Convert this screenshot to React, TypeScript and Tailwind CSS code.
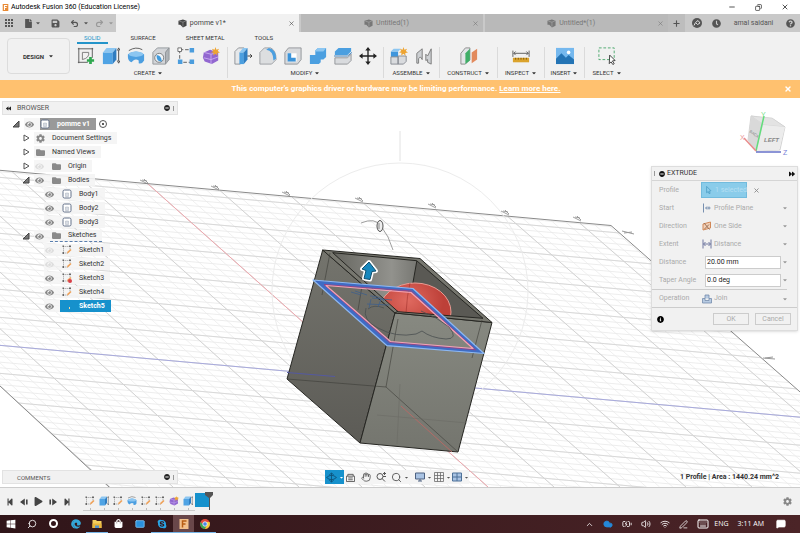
import type { ReactNode } from 'react'
import { clsx } from 'clsx'
import {
  FaBackward,
  FaCaretDown,
  FaCog,
  FaEye,
  FaFolder,
  FaForward,
  FaInfoCircle,
  FaMinusCircle,
  FaQuestionCircle,
  FaClock,
  FaPlay,
  FaStepBackward,
  FaStepForward,
  FaSave,
  FaFile,
  FaWindows,
  FaEdge,
  FaSkype,
  FaShoppingBag
} from 'react-icons/fa'
import {
  BatteryCharging,
  ChevronUp,
  Cloud,
  Copy,
  Hand,
  Keyboard,
  Mail,
  MessageSquareText,
  Minus,
  PenLine,
  Plus,
  Redo2,
  Search,
  Undo2,
  Volume2,
  Wifi,
  X
} from 'lucide-react'

type IconProps = { children: ReactNode; className?: string }

const Icon = ({ children, className = 'size-[18px]' }: IconProps) => {
  return (
    <svg
      viewBox="0 0 20 20"
      fill="none"
      aria-hidden="true"
      className={clsx('shrink-0', className)}
    >
      {children}
    </svg>
  )
}

const Star = () => {
  return (
    <path
      d="m15 0 1 3 3-1-1.500 2.500L20 6l-3 .7.200 3L15 7.500l-2.500 2 .3-3L10 6l2.500-1.500L11 2l3 1Z"
      fill="#eda432"
    />
  )
}

const SketchIcon = ({ className }: { className?: string }) => {
  return (
    <Icon className={className}>
      <path d="M2 3h15M3 2v15M2 16h10M16 2v9" stroke="#777" strokeDasharray="3 1" />
      <path d="M1 1h3v3H1ZM14 1h4v3h-4ZM1 14h3v4H1Z" fill="#666" />
      <path d="m10 17 1-4 6-5 2 2-6 6Z" fill="#f0a35b" />
    </Icon>
  )
}

const BodyIcon = ({ className }: { className?: string }) => {
  return (
    <Icon className={className}>
      <rect x="2" y="2" width="16" height="16" rx="3" fill="#fff" stroke="#65728a" strokeWidth="2" />
      <path d="M7 8h6v7H7Z" fill="#d7dbe2" stroke="#a9b0bd" />
    </Icon>
  )
}

const BoxIcon = ({ className }: { className?: string }) => {
  return (
    <Icon className={className}>
      <path d="m1 4 10-3 8 3v11l-8 4-6-6H1Z" fill="currentColor" />
      <path d="m3 5 8 2v10M11 7l7-3" stroke="#bbb" />
    </Icon>
  )
}

const ExtrudeIcon = ({ className }: { className?: string }) => {
  return (
    <Icon className={className}>
      <path d="M1 6h11v13H1Z" fill="#4fa3e4" />
      <path d="m1 6 4-5h11l-4 5Z" fill="#8cc6f1" />
      <path d="m12 6 4-5v13l-4 5Z" fill="#2f7dc1" />
      <path d="M18.500 3v13M17 4l1.500-3L20 4M17 15l1.500 3 1.500-3" stroke="#444" />
    </Icon>
  )
}

const RevolveIcon = ({ className }: { className?: string }) => {
  return (
    <Icon className={className}>
      <path d="M1 8q9-6 18 0v7q-2 4-6 3v-3q-3-2-6 0l-2 2q-4-2-4-6Z" fill="#4d9fe0" />
      <ellipse cx="10" cy="8" rx="8" ry="3" fill="#8cc6f1" />
      <path d="M2 4q8-5 15-1" stroke="#555" />
    </Icon>
  )
}

const FormIcon = ({ className }: { className?: string }) => {
  return (
    <Icon className={className}>
      <path d="m2 6 7-3 9 3v9l-7 4-8-3-2-4Z" fill="#9267d0" />
      <path d="m2 6 8 2 8-2M10 8v11M2 12l8 2 8-3" stroke="#c9aef0" />
      <Star />
    </Icon>
  )
}

type Group = { label: string; className: string; icons: ReactNode[] }

const GROUPS: Group[] = [
  {
    label: 'CREATE',
    className: 'px-[7px]',
    icons: [
      <Icon key="sketch">
        <path d="M1 2h17M2 1v17M1 17h11M17 1v11" stroke="#555" />
        <path d="M6 6h7q1 6-7 8Z" stroke="#777" />
        <path d="M15 11v8M11 15h8" stroke="#2fa84f" strokeWidth="3" />
      </Icon>,
      <ExtrudeIcon key="extrude" />,
      <RevolveIcon key="revolve" />,
      <Icon key="hole">
        <path d="m1 6 5-5h13l-4 5v13H1Z" fill="#d3d5d8" stroke="#909498" />
        <path d="m15 6 4-5v13l-4 5Z" fill="#aeb2b6" stroke="#909498" />
        <circle cx="8" cy="12" r="5" fill="#eef3f7" stroke="#777" />
        <path d="M5 9q5 0 6 7-6 1-6-7Z" fill="#419bdd" />
      </Icon>,
      <Icon key="pattern">
        <path d="M3 3h14M3 3v14h14" stroke="#555" strokeDasharray="4 2" />
        <path d="M1 1h4v4H1Z" fill="#fff" stroke="#666" />
        <path d="M14 1h5v5h-5ZM1 14h5v5H1ZM14 14h5v5h-5Z" fill="#4b9ddd" />
      </Icon>,
      <FormIcon key="form" />
    ]
  },
  {
    label: 'MODIFY',
    className: 'px-[6px]',
    icons: [
      <Icon key="pull">
        <path d="m1 5 4-4h6v13l-4 5H1Z" fill="#e6e8ea" stroke="#8b8f94" />
        <path d="M6 6h5v13H6Z" fill="#4b9fe0" />
        <path d="m6 6 4-5h5l-4 5Z" fill="#8cc6f1" />
        <path d="m11 6 4-5v13l-4 5Z" fill="#2f7dc1" />
        <path d="M15 10h5m-2-2 2 2-2 2" stroke="#333" />
      </Icon>,
      <Icon key="fillet">
        <path d="m1 6 5-5h7q6 3 6 13l-5 5H1Z" fill="#dcdee0" stroke="#989ca0" />
        <path d="M8 3q8 1 8 12l3-2Q19 3 11 1Z" fill="#4b9fe0" />
      </Icon>,
      <Icon key="shell">
        <path d="m1 6 4-5h14v13l-4 5H1Z" fill="#d8dadd" stroke="#8e9296" />
        <path d="M4 7h10v9H4Z" fill="#fff" />
        <path d="M4 7v9h9v-4H8V7Z" fill="#3b93d9" />
      </Icon>,
      <Icon key="combine">
        <path d="M1 9h6V4l3-3h9v10l-3 3h-3v3l-2 2H1Z" fill="#4b9fe0" />
        <path d="m7 4 3-3h9l-3 4H7Z" fill="#8cc6f1" />
      </Icon>,
      <Icon key="split">
        <path d="m1 5 4-4h14v4l-4 4H1Z" fill="#4b9fe0" />
        <path d="M1 12h14l4-4v7l-4 4H1Z" fill="#d9dbde" stroke="#8e9296" />
        <path d="M0 10h15l5-4" stroke="#3579b5" />
      </Icon>,
      <Icon key="move">
        <path d="M10 2v16M2 10h16" stroke="#222" strokeWidth="1.500" />
        <path d="m10 0 3 4H7ZM10 20l3-4H7ZM0 10l4-3v6ZM20 10l-4-3v6Z" fill="#222" />
      </Icon>
    ]
  },
  {
    label: 'ASSEMBLE',
    className: 'px-[6px]',
    icons: [
      <Icon key="component">
        <path d="M1 5h8v6H1Z" fill="#3f96dc" />
        <path d="m1 5 3-3h8L9 5Z" fill="#8cc6f1" />
        <path d="M1 11h8v8H1ZM9 10h9v6l-3 3H9Z" fill="#d9dbde" stroke="#83888e" />
        <Star />
      </Icon>,
      <Icon key="joint">
        <path d="M2 7 8 2v12l-2-3-2 2v5H2ZM12 8l2 2 4-8v17l-4-2v-3l-2 1Z" fill="#cdd0d3" stroke="#777" />
      </Icon>
    ]
  },
  {
    label: 'CONSTRUCT',
    className: 'w-[58px]',
    icons: [
      <Icon key="plane">
        <path d="m1 7 5-6h5v13l-5 5H1Z" fill="#e3e5e8" stroke="#888" />
        <path d="m6 7 5-5v13l-5 4Z" fill="#3fae67" />
        <path d="m13 6 6-4v12l-6 4Z" fill="#e28a5d" />
      </Icon>
    ]
  },
  {
    label: 'INSPECT',
    className: 'w-[47px]',
    icons: [
      <Icon key="measure">
        <path d="M1 4v7M19 4v7M2 7h16M4 5 2 7l2 2M16 5l2 2-2 2" stroke="#555" />
        <path d="M1 12h18v5H1Z" fill="#dba32c" />
        <path d="M4 12v2m3-2v2m3-2v2m3-2v2m3-2v2" stroke="#79540a" />
      </Icon>
    ]
  },
  {
    label: 'INSERT',
    className: 'w-10',
    icons: [
      <Icon key="picture">
        <path d="M0 1h20v18H0Z" fill="#75b8ee" />
        <path d="M0 13 6 7l5 5 3-3 6 5v5H0Z" fill="#2474b5" />
        <circle cx="14" cy="6" r="2" fill="#fff" />
      </Icon>
    ]
  },
  {
    label: 'SELECT',
    className: 'w-11',
    icons: [
      <Icon key="select">
        <path d="M1 1h17v13H1Z" stroke="#45a568" strokeDasharray="3 2" />
        <path d="m13 9 6 6-3 .5 2 3-1.500 1-2-3-2 2Z" fill="#fff" stroke="#333" />
      </Icon>
    ]
  }
]

const DOCUMENTS = [
  { name: 'pomme v1*', active: true },
  { name: 'Untitled(1)', active: false },
  { name: 'Untitled*(1)', active: false }
]

const TitleBar = () => {
  return (
    <header className="flex h-[14px] items-center bg-white pl-0.5">
      <Icon className="size-[7px]">
        <path d="M2 0h16v20H2Z" fill="#e98a34" />
        <path d="M7 17V4h8M7 10h6" stroke="#fff" strokeWidth="3" />
      </Icon>
      <h1 className="ml-0.5 flex-1 font-['Roboto',sans-serif] text-[7px]">
        Autodesk Fusion 360 (Education License)
      </h1>
      <div className="flex items-center gap-[19px] pr-[11px]">
        <button aria-label="Minimize">
          <Minus className="size-[8px]" />
        </button>
        <button aria-label="Restore">
          <Copy className="size-[7px] -scale-x-100" />
        </button>
        <button aria-label="Close">
          <X className="size-[8px]" />
        </button>
      </div>
    </header>
  )
}

const DocumentBar = () => {
  return (
    <div className="flex h-[18px] bg-[#c9c9c9] text-[#555]">
      <div className="flex w-[116px] items-center pl-[5px]">
        <button aria-label="Data panel">
          <svg viewBox="0 0 9 9" className="size-[9px]" fill="#555" aria-hidden="true">
            <path d="M0 0h2v2H0ZM3 0h2v2H3ZM6 0h2v2H6ZM0 3h2v2H0ZM3 3h2v2H3ZM6 3h2v2H6ZM0 6h2v2H0ZM3 6h2v2H3ZM6 6h2v2H6Z" />
          </svg>
        </button>
        <button aria-label="File" className="ml-2.5 flex items-center gap-0.5">
          <FaFile className="size-[9px]" />
          <FaCaretDown className="size-[6px]" />
        </button>
        <button aria-label="Save" className="ml-[10px]">
          <FaSave className="size-[9px]" />
        </button>
        <button aria-label="Undo" className="ml-[10px] flex items-center gap-1">
          <Undo2 className="size-[9px]" strokeWidth={3} />
          <FaCaretDown className="size-[6px]" />
        </button>
        <button aria-label="Redo" className="ml-[6px] flex items-center gap-1 text-[#999]">
          <Redo2 className="size-[9px]" strokeWidth={3} />
          <FaCaretDown className="size-[6px]" />
        </button>
      </div>
      <div className="flex flex-1 gap-[2px]">
        {DOCUMENTS.map((item) => {
          return (
            <div
              key={item.name}
              className={clsx(
                'flex flex-1 items-center pr-1',
                item.active ? 'bg-[#f1f1f1] text-[#444]' : 'bg-[#b9b9b9] text-[#777]'
              )}
            >
              <button className="flex flex-1 items-center justify-center gap-[3px] font-['Roboto',sans-serif] text-[7px]">
                <BoxIcon className="size-[9px]" />
                {item.name}
              </button>
              <button aria-label={`Close ${item.name}`}>
                <X className="size-[7px]" />
              </button>
            </div>
          )
        })}
      </div>
      <div className="flex w-[132px] items-center pr-[5px]">
        <button aria-label="New tab" className="grid h-full w-[17px] place-items-center bg-[#bdbdbd]">
          <Plus className="size-[9px]" strokeWidth={3} />
        </button>
        <button aria-label="Extensions" className="ml-[7px]">
          <Icon className="size-[10px]">
            <circle cx="10" cy="10" r="10" fill="#555" />
            <path d="m4 15 3-6 5-4 4 5-5 3-3-3" stroke="#ddd" strokeWidth="2" />
          </Icon>
        </button>
        <button aria-label="Job status" className="ml-[10px]">
          <FaClock className="size-[9px]" />
        </button>
        <button className="flex-1 font-['Roboto',sans-serif] text-[7px]">
          amal saidani
        </button>
        <button aria-label="Help">
          <FaQuestionCircle className="size-[9px]" />
        </button>
      </div>
    </div>
  )
}

const Toolbar = () => {
  return (
    <div className="flex h-12 bg-[#f1f1f1] font-['Roboto',sans-serif] text-[6px] text-[#333]">
      <button className="my-[6px] ml-[7px] flex w-[63px] items-center justify-center gap-1 rounded-sm border border-[#dcdcdc] font-bold">
        DESIGN
        <FaCaretDown className="size-[6px]" />
      </button>
      <div>
        <nav aria-label="Workspace tabs" className="flex h-3 gap-4 pl-[7px]">
          {['SOLID', 'SURFACE', 'SHEET METAL', 'TOOLS'].map((tab, index) => {
            return (
              <a
                key={tab}
                href="#"
                className={clsx(
                  'border-b-2 px-[7px] leading-[12px]',
                  index === 0 ? 'border-[#2494c9] text-[#2494c9]' : 'border-transparent'
                )}
              >
                {tab}
              </a>
            )
          })}
        </nav>
        <div className="flex divide-x divide-[#dadada] pt-[3px]">
          {GROUPS.map((group) => {
            return (
              <div key={group.label} className={clsx('flex flex-col items-center', group.className)}>
                <div className="flex gap-[7px]">
                  {group.icons.map((icon, index) => {
                    return (
                      <button key={index} aria-label={`${group.label} ${index + 1}`}>
                        {icon}
                      </button>
                    )
                  })}
                </div>
                <button className="mt-[3px] flex items-center gap-0.5 leading-[10px]">
                  {group.label}
                  <FaCaretDown className="size-[6px]" />
                </button>
              </div>
            )
          })}
        </div>
      </div>
    </div>
  )
}

const Banner = () => {
  return (
    <div
      role="alert"
      className="flex h-[18px] items-center bg-[#ffc16f] px-2 font-['Roboto',sans-serif] text-[8px] font-bold text-white"
    >
      <p className="flex-1 text-center">
        This computer's graphics driver or hardware may be limiting performance.{' '}
        <a href="#" className="underline">
          Learn more here.
        </a>
      </p>
      <button aria-label="Dismiss">
        <X className="size-[8px]" strokeWidth={4} />
      </button>
    </div>
  )
}

const range = (from: number, to: number) => {
  return Array.from({ length: to - from + 1 }, (_, index) => {
    return from + index
  })
}

// lines going down to the right, five cells between two major ones
const steepLine = (step: number) => {
  const unit = step / 5
  const x1 = 148 + unit * (unit < 0 ? 68 : 72)
  const x2 = 488 + unit * (unit < 0 ? 63 : 66)
  return `M${x1} ${170.500 + x1 * 0.091}L${x2} 487`
}

const shallowLine = (step: number) => {
  const y = 345 + step * 5.600
  return `M-260 ${y - 23}L820 ${y + 74}`
}

const TICKS = [
  [144, 182],
  [215, 188],
  [286, 194],
  [359, 200],
  [432, 206],
  [505, 213],
  [577, 219]
]

const Grid = () => {
  return (
    <g fill="none">
      <clipPath id="ground">
        <path d="M-258 147 611 225.500 908 487H109Z" />
      </clipPath>
      <g clipPath="url(#ground)">
        <path d={range(-30, 32).map(steepLine).join('')} stroke="#f0f0f0" />
        <path d={range(-32, 48).map(shallowLine).join('')} stroke="#e8e8e8" strokeWidth=".8" />
        <path
          d={range(-6, 6).map((step) => steepLine(step * 5)).join('')}
          stroke="#d3d3d3"
        />
        <path
          d={range(-6, 9).map((step) => shallowLine(step * 5)).join('')}
          stroke="#d3d3d3"
          strokeWidth=".8"
        />
        <path d={steepLine(0)} stroke="#efa8ae" />
        <path d={shallowLine(0)} stroke="#9a9ddd" strokeWidth=".8" />
      </g>
      <path d="M-258 147 611 225.500 908 487M109 487-258 147" stroke="#8a8a8a" />
      {TICKS.map(([x, y]) => {
        return <path key={x} d={`m${x - 4} ${y - 2} 8 4m-6-4 5 1m-3-2 4 4`} stroke="#888" strokeWidth=".8" />
      })}
      <path d="m622 231 12 3m-10-1 8-1m131 126 12 1m-10-1 8-1" stroke="#999" />
      <circle cx="400" cy="291" r="128" stroke="#ececec" />
      <path d="M400 131v30" stroke="#e2e2e2" />
    </g>
  )
}

const Model = () => {
  return (
    <g fill="none" strokeLinejoin="round">
      <defs>
        <linearGradient id="left-face" x1="0" y1="0" x2="0" y2="1">
          <stop offset="0" stopColor="#74746d" />
          <stop offset="1" stopColor="#5c5b56" />
        </linearGradient>
        <linearGradient id="right-face" x1="0" y1="0" x2="0" y2="1">
          <stop offset="0" stopColor="#878981" />
          <stop offset="1" stopColor="#74756e" />
        </linearGradient>
        <linearGradient id="back-wall">
          <stop offset="0" stopColor="#65655f" />
          <stop offset="0.7" stopColor="#92928d" />
          <stop offset="1" stopColor="#777772" />
        </linearGradient>
        <radialGradient id="apple" cx=".4" cy=".3">
          <stop offset="0" stopColor="#e06a60" />
          <stop offset="1" stopColor="#bd4038" />
        </radialGradient>
        <clipPath id="opening">
          <path d="M332.700 252.700 416.700 260.700 483 318.300 398 311.700Z" />
        </clipPath>
      </defs>
      <path d="M322.700 250 395 313 360 443 287 379Z" fill="url(#left-face)" stroke="#262622" />
      <path d="m395 313 97 9.500L458 452 360 443Z" fill="url(#right-face)" stroke="#262622" />
      <path d="m322.700 250 97.300 8.500 72 64-97-9.500Z" fill="#77776f" stroke="#262622" />
      <g clipPath="url(#opening)">
        <path d="M332 252h85l-6 60h-20Z" fill="url(#back-wall)" />
        <path d="M417 260 490 320h-90l12-30Z" fill="#5a5954" />
        <path d="m417 260-5 28" stroke="#262622" />
        <ellipse cx="415" cy="312" rx="36" ry="29" fill="url(#apple)" stroke="#e99a92" />
        <path d="M410 283q-3 12-4 30" stroke="#a1332d" strokeWidth=".6" />
      </g>
      <path
        d="M332.700 252.700 416.700 260.700 483 318.300 398 311.700Z"
        stroke="#262622"
      />
      <path
        d="m287 379 99 8 72 65M386 387l12-68M330 253l-8 42M482 320l-10 38M362 286l-4 24"
        stroke="#3d3d38"
        strokeWidth=".6"
      />
      <path d="M287 372.500 335 376.500" stroke="#5459a0" />
      <path d="m401 406 51 46" stroke="#b36a66" />
      <path d="m400 384-3 60m-20-29 90 8" stroke="#686963" strokeWidth=".5" />
      {/* sketch profile with the apple curve */}
      <path
        d="M313 280 413 288.500 484 353.500 387 345.700ZM325 285 390 341.700 474 349 411 291.700Z"
        fill="#3f6cc4"
        fillRule="evenodd"
      />
      <path d="M313 280 413 288.500 484 353.500 387 345.700Z" stroke="#8db8f2" strokeWidth="1.200" />
      <path d="M324 284.500 389.500 342.500 475.500 349.800 411.500 291Z" stroke="#a83c78" strokeWidth=".8" />
      <path d="M326 285.500 390.500 341.500 473 348.500 411 292.500Z" stroke="#f6a2b4" strokeWidth="1.200" />
      <path
        d="M366 308q-4 12 12 20 18 10 38 6l6-3q9 7 24 8 13 0 3-12-12-10-28-16M368 309q6-5 16-1"
        stroke="#4a4f50"
        strokeWidth=".8"
      />
      <path d="m351 292 10 3m-6-4 12 4m3 1q10 0 14 5m-12-3 20 2m-25 4 22 1m-18-6-2 9m12-9-3 8" stroke="#40608a" strokeWidth=".8" />
      <path d="M395 313 398 311" stroke="#262622" />
      {/* manipulator */}
      <path d="M361 223q14-6 20 3 8 10 12 24" stroke="#888" strokeWidth=".8" />
      <ellipse cx="380" cy="226" rx="3" ry="5.500" fill="#eee" stroke="#555" />
      <path d="M379 223v6" stroke="#888" />
      <path
        d="m369 262 7 9-4 .5-2 8-6-1 2-8-4-1.500Z"
        fill="#1787bd"
        stroke="#fff"
        strokeWidth="4"
      />
      <path d="m369 262 7 9-4 .5-2 8-6-1 2-8-4-1.500Z" fill="#1787bd" stroke="#10506f" />
    </g>
  )
}

const ViewCube = () => {
  return (
    <g fill="none">
      <path d="m751 116-3 24 8 11 24-1 5-23-12-8Z" fill="#f0f0f0" stroke="#bbb" strokeWidth=".6" />
      <path d="m751 116 13 9 21 2-13-9Z" fill="#e3e3e3" stroke="#ccc" strokeWidth=".6" />
      <path d="m751 116 13 9-8 26-8-11Z" fill="#d9d9d9" />
      <path d="m763 125 22 2-6 23-23 1Z" fill="#ececec" />
      <path d="m756 151 8-35" stroke="#63dd7c" strokeWidth="1.500" />
      <path d="M756 151 744 138" stroke="#e98c8c" strokeWidth="1.500" />
      <path d="M756 152h25" stroke="#6670c8" strokeWidth="1.500" />
      <g fontFamily="Liberation Sans, sans-serif" fontSize="7">
        <text x="764" y="142" fill="#888" fontSize="6" fontStyle="italic" fontWeight="bold">
          LEFT
        </text>
        <text x="749" y="132" fill="#888" fontSize="4" transform="rotate(35 749 132)">
          BACK
        </text>
        <text x="761" y="117" fill="#7ee08d">Y</text>
        <text x="740" y="140" fill="#eb9a9a">X</text>
        <text x="783" y="155" fill="#777fd6">Z</text>
      </g>
    </g>
  )
}

type Node = {
  label: string
  depth: number
  kind: 'root' | 'settings' | 'folder' | 'body' | 'sketch'
  arrow?: 'open' | 'closed'
  eye?: 'on' | 'off'
  selected?: boolean
  locked?: boolean
}

const NODES: Node[] = [
  { label: 'pomme v1', depth: 0, kind: 'root', arrow: 'open', eye: 'on' },
  { label: 'Document Settings', depth: 1, kind: 'settings', arrow: 'closed' },
  { label: 'Named Views', depth: 1, kind: 'folder', arrow: 'closed' },
  { label: 'Origin', depth: 1, kind: 'folder', arrow: 'closed', eye: 'off' },
  { label: 'Bodies', depth: 1, kind: 'folder', arrow: 'open', eye: 'on' },
  { label: 'Body1', depth: 2, kind: 'body', eye: 'on' },
  { label: 'Body2', depth: 2, kind: 'body', eye: 'on' },
  { label: 'Body3', depth: 2, kind: 'body', eye: 'on' },
  { label: 'Sketches', depth: 1, kind: 'folder', arrow: 'open', eye: 'on' },
  { label: 'Sketch1', depth: 2, kind: 'sketch', eye: 'off' },
  { label: 'Sketch2', depth: 2, kind: 'sketch', eye: 'off' },
  { label: 'Sketch3', depth: 2, kind: 'sketch', eye: 'on', locked: true },
  { label: 'Sketch4', depth: 2, kind: 'sketch', eye: 'on' },
  { label: 'Sketch5', depth: 2, kind: 'sketch', eye: 'on', selected: true }
]

const NodeIcon = ({ node }: { node: Node }) => {
  if (node.kind === 'settings') {
    return <FaCog className="size-[9px] text-[#888]" />
  }

  if (node.kind === 'folder') {
    return <FaFolder className="size-[9px] text-[#8a8a8a]" />
  }

  if (node.kind === 'sketch') {
    return (
      <span className="relative">
        <SketchIcon className={clsx('size-[10px]', node.selected && 'opacity-0')} />
        {node.locked && <span className="absolute right-0 bottom-0 size-[4px] rounded-xs bg-[#d84048]" />}
        {node.selected && <span className="absolute right-[2px] bottom-[2px] h-[2px] w-px bg-[#f3d9a0]" />}
      </span>
    )
  }

  return <BodyIcon className="size-[10px]" />
}

const BrowserPanel = () => {
  return (
    <section
      aria-label="Browser"
      className="flex w-44 flex-col items-start font-['Roboto',sans-serif] text-[7px] text-[#333]"
    >
      <div className="flex h-[14px] w-full items-center border border-[#e2e2e2] bg-[#f1f1f1] px-[3px] text-[#555]">
        <FaBackward className="size-[5px] text-[#222]" />
        <h2 className="ml-[6px] flex-1">BROWSER</h2>
        <button aria-label="Collapse browser">
          <FaMinusCircle className="size-[6px] text-[#222]" />
        </button>
        <span className="ml-[3px] h-[5px] w-px bg-[#999]" />
      </div>
      <ul className="mt-0.5">
        {NODES.map((node) => {
          return (
            <li
              key={node.label}
              className={clsx(
                'flex h-[14px] items-center',
                node.depth === 0 && 'pl-[10px]',
                node.depth === 1 && 'pl-[20px]',
                node.depth === 2 && 'pl-[42px]'
              )}
            >
              {node.arrow && (
                <button aria-label={`Toggle ${node.label}`} className="mr-1">
                  <svg viewBox="0 0 8 8" className="size-[8px]" aria-hidden="true">
                    {node.arrow === 'open' ? (
                      <path d="M7 1v6H1Z" fill="#777" stroke="#444" />
                    ) : (
                      <path d="M2 1v6l5-3Z" fill="#fff" stroke="#555" />
                    )}
                  </svg>
                </button>
              )}
              {node.eye && (
                <button
                  aria-label={`Visibility of ${node.label}`}
                  className="grid h-3 w-4 place-content-center justify-start bg-[#f4f4f4]/80 pl-px"
                >
                  <FaEye
                    className={clsx('size-[9px]', node.eye === 'on' ? 'text-[#888]' : 'text-[#ddd]')}
                  />
                </button>
              )}
              <span
                className={clsx(
                  'flex h-3 items-center gap-[7px] pr-[6px]',
                  node.kind === 'root' && 'bg-[#999] font-bold text-white',
                  node.kind !== 'root' && !node.selected && 'bg-[#f4f4f4]/90 pl-0.5',
                  node.selected && 'bg-[#1691cc] pl-0.5 font-bold text-white',
                  node.label === 'Sketches' && 'border-b border-dashed border-[#5a7fae]'
                )}
              >
                <NodeIcon node={node} />
                {node.label}
              </span>
              {node.kind === 'root' && (
                <button
                  aria-label="Activate component"
                  className="ml-[3px] grid size-[8px] place-items-center rounded-full border border-[#555]"
                >
                  <span className="size-[2px] rounded-full bg-[#222]" />
                </button>
              )}
            </li>
          )
        })}
      </ul>
    </section>
  )
}

const CommentsPanel = () => {
  return (
    <section
      aria-label="Comments"
      className="flex h-[14px] w-44 items-center border border-[#e2e2e2] bg-[#f1f1f1] pr-[3px] pl-[14px] font-['Roboto',sans-serif] text-[6px] text-[#555]"
    >
      <h2 className="flex-1">COMMENTS</h2>
      <button aria-label="Add comment">
        <FaMinusCircle className="size-[6px] text-[#222]" />
      </button>
      <span className="ml-[3px] h-[5px] w-px bg-[#999]" />
    </section>
  )
}

const OPTIONS = [
  {
    label: 'Start',
    value: 'Profile Plane',
    icon: <path d="M3 1v18M8 10h9m-7-3-3 3 3 3m4-6v6" stroke="#7890b0" strokeWidth="2" />
  },
  {
    label: 'Direction',
    value: 'One Side',
    icon: (
      <>
        <path d="m2 6 15-4v12L2 18Z" fill="#f4d2b8" stroke="#d18858" strokeWidth="2" />
        <path d="m4 4 11 13M5 16 14 7" stroke="#9a7058" strokeWidth="2" />
      </>
    )
  },
  {
    label: 'Extent',
    value: 'Distance',
    icon: <path d="M2 1v18M18 1v18M3 10h14M7 6l-4 4 4 4M13 6l4 4-4 4" stroke="#7078a0" strokeWidth="2" />
  }
]

const OptionSelect = ({ label, value, icon }: { label: string; value: string; icon: ReactNode }) => {
  return (
    <div className="flex items-center">
      <label htmlFor={label} className="w-[43px] text-[#aaa]">
        {label}
      </label>
      <Icon className="size-[10px]">{icon}</Icon>
      <select
        id={label}
        defaultValue={value}
        className="ml-[2px] min-w-0 flex-1 appearance-none bg-transparent text-[#aaa]"
      >
        <option>{value}</option>
      </select>
      <FaCaretDown className="size-[6px] text-[#999]" />
    </div>
  )
}

const OptionInput = ({ label, value }: { label: string; value: string }) => {
  return (
    <div className="flex items-center">
      <label htmlFor={label} className="w-[46px] text-[#aaa]">
        {label}
      </label>
      <input
        id={label}
        defaultValue={value}
        className="h-[13px] min-w-0 flex-1 border border-[#ccc] bg-white px-px text-[#222]"
      />
      <FaCaretDown className="ml-px size-[6px] text-[#999]" />
    </div>
  )
}

const ExtrudePanel = () => {
  return (
    <section
      aria-label="Extrude"
      className="w-[147px] border border-[#ddd] bg-[#f1f1f1] font-['Roboto',sans-serif] text-[7px] shadow-sm"
    >
      <div className="flex h-[14px] items-center border-b border-[#d5d5d5] px-[2px] text-[#333]">
        <span className="h-[5px] w-px bg-[#999]" />
        <FaMinusCircle className="ml-1 size-[6px] text-[#111]" />
        <h2 className="ml-[2px] flex-1">EXTRUDE</h2>
        <FaForward className="size-[6px] text-[#111]" />
      </div>
      <form>
        <div className="grid h-[108px] grid-cols-1 grid-rows-6 pr-[9px] pl-[7px]">
          <div className="flex items-center">
            <span className="w-[42px] text-[#aaa]">Profile</span>
            <button
              type="button"
              className="flex h-4 w-[46px] items-center gap-0.5 border border-[#72bbdd] bg-[#8accea] pl-[3px] whitespace-nowrap text-[#b5dff2]"
            >
              <Icon className="size-[8px]">
                <path d="m4 1 11 11-5 1 3 5-3 1-2-5-4 3Z" stroke="#4d9dc4" strokeWidth="2" />
              </Icon>
              1 selected
            </button>
            <button type="button" aria-label="Clear selection" className="ml-[6px]">
              <X className="size-[7px] text-[#888]" strokeWidth={3} />
            </button>
          </div>
          {OPTIONS.map((option) => {
            return <OptionSelect key={option.label} {...option} />
          })}
          <OptionInput label="Distance" value="20.00 mm" />
          <OptionInput label="Taper Angle" value="0.0 deg" />
        </div>
        <hr className="mr-[10px] border-[#ccc]" />
        <div className="grid h-[18px] grid-cols-1 border-b border-[#ccc] pr-[9px] pl-[7px]">
          <OptionSelect
            label="Operation"
            value="Join"
            icon={<path d="M1 9h5V2h8v7h5v9H1ZM6 9v4h8V9" fill="#b8cbe2" stroke="#6f87a8" strokeWidth="1.500" />}
          />
        </div>
        <div className="flex h-[22px] items-center gap-1.5 pr-[6px] pl-[5px]">
          <FaInfoCircle className="size-[7px] text-black" />
          <button type="button" className="ml-auto h-3 w-[36px] border border-[#ccc] text-[#aaa]">
            OK
          </button>
          <button type="button" className="h-3 w-[36px] border border-[#ccc] text-[#aaa]">
            Cancel
          </button>
        </div>
      </form>
    </section>
  )
}

const NavigationBar = () => {
  return (
    <div className="flex h-[14px] items-center bg-[#f4f4f4] text-[#555]">
      <button aria-label="Orbit" className="flex h-full w-[19px] items-center justify-center gap-0.5 bg-[#1691cc]">
        <Icon className="size-[11px]">
          <path d="M1 10q9-8 18 0-9 8-18 0ZM10 2v16M6 5l4-3 4 3M6 15l4 3 4-3" stroke="#0d4e74" strokeWidth="1.500" />
        </Icon>
        <FaCaretDown className="size-[5px] text-white" />
      </button>
      <button aria-label="Look at" className="ml-[2px]">
        <Icon className="size-[9px]">
          <path d="M1 7h18v12H1ZM4 7V3h12v4M5 11h10M5 15h10" stroke="#555" strokeWidth="2" />
        </Icon>
      </button>
      <button aria-label="Pan" className="ml-[6px]">
        <Hand className="size-[10px]" />
      </button>
      <button aria-label="Zoom" className="ml-[5px]">
        <Icon className="size-[10px]">
          <circle cx="8" cy="9" r="6" stroke="#555" strokeWidth="2" />
          <path d="m12 13 6 6M14 3h6M17 0v6M14 9h6" stroke="#555" strokeWidth="2" />
        </Icon>
      </button>
      <button aria-label="Fit" className="ml-[5px] flex items-center gap-0.5">
        <Search className="size-[11px]" />
        <FaCaretDown className="size-[5px]" />
      </button>
      <button aria-label="Display settings" className="ml-[6px] flex items-center gap-0.5">
        <Icon className="size-[10px]">
          <path d="M1 2h18v12H1ZM6 18h8M10 14v4" fill="#a9c3e3" stroke="#4d6180" strokeWidth="2" />
        </Icon>
        <FaCaretDown className="size-[5px]" />
      </button>
      <button aria-label="Grid and snaps" className="ml-[2px] flex items-center gap-0.5">
        <Icon className="size-[10px]">
          <path d="M1 1h18v18H1ZM1 7h18M1 13h18M7 1v18M13 1v18" stroke="#666" strokeWidth="1.500" />
        </Icon>
        <FaCaretDown className="size-[5px]" />
      </button>
      <button aria-label="Viewports" className="ml-[1px] flex items-center gap-0.5">
        <Icon className="size-[10px]">
          <path d="M1 2h18v16H1ZM10 2v16M1 10h18" fill="#a9c3e3" stroke="#4d7199" strokeWidth="2" />
        </Icon>
        <FaCaretDown className="size-[5px]" />
      </button>
    </div>
  )
}

const Canvas = () => {
  return (
    <main className="relative flex flex-1 flex-col justify-between bg-white pb-[3px]">
      <svg
        viewBox="0 98 800 389"
        preserveAspectRatio="xMidYMid slice"
        className="absolute inset-0 size-full"
        role="img"
        aria-label="Model view"
      >
        <Grid />
        <Model />
        <ViewCube />
      </svg>
      <div className="relative flex items-start justify-between pt-[3px] pr-[2px] pl-[2px]">
        <BrowserPanel />
        <div className="pt-[65px]">
          <ExtrudePanel />
        </div>
      </div>
      <div className="relative grid grid-cols-[1fr_auto_1fr] items-center pr-2 pl-[2px]">
        <CommentsPanel />
        <NavigationBar />
        <p className="pr-[13px] text-right font-['Roboto',sans-serif] text-[7px] font-bold text-[#333]">
          1 Profile | Area : 1440.24 mm^2
        </p>
      </div>
    </main>
  )
}

const FEATURES = ['sketch', 'extrude', 'sketch', 'revolve', 'sketch', 'sketch', 'form', 'extrude']

const Timeline = () => {
  return (
    <div className="flex h-7 items-center border-t border-[#ccc] bg-[#f1f1f1] pr-2 pl-[6px] text-[#444]">
      <div className="flex gap-[6px]">
        <button aria-label="To start"><FaStepBackward className="size-[8px]" /></button>
        <button aria-label="Step back">
          <Icon className="size-[8px]">
            <path d="M12 1v18L0 10ZM15 4h4v12h-4Z" fill="currentColor" />
          </Icon>
        </button>
        <button aria-label="Play"><FaPlay className="size-[9px]" /></button>
        <button aria-label="Step forward">
          <Icon className="size-[8px]">
            <path d="M8 1v18l12-9ZM1 4h4v12H1Z" fill="currentColor" />
          </Icon>
        </button>
        <button aria-label="To end"><FaStepForward className="size-[8px]" /></button>
      </div>
      <ol className="ml-3 flex">
        {FEATURES.map((feature, index) => {
          return (
            <li
              key={index}
              className="flex h-[18px] w-[14px] flex-col items-center gap-[2px] border-b border-[#ccc] pt-[3px]"
            >
              {feature === 'sketch' && <SketchIcon className="size-[10px]" />}
              {feature === 'extrude' && <ExtrudeIcon className="size-[10px]" />}
              {feature === 'revolve' && <RevolveIcon className="size-[10px]" />}
              {feature === 'form' && <FormIcon className="size-[10px]" />}
              <span className="h-[2px] w-px bg-[#bbb]" />
            </li>
          )
        })}
      </ol>
      <div className="flex">
        <span className="size-[14px] bg-[#1691cc]" />
        <svg viewBox="0 0 8 18" className="-mt-px -ml-1 h-[18px] w-2" aria-hidden="true">
          <path d="M0 0h8v3L5 6v12H4V6L0 3Z" fill="#555" />
        </svg>
      </div>
      <button aria-label="Timeline settings" className="ml-auto">
        <FaCog className="size-[9px] text-[#888]" />
      </button>
    </div>
  )
}

const APPS = [
  { name: 'Start', icon: <FaWindows className="size-[10px]" /> },
  { name: 'Search', icon: <Search className="size-[10px] -scale-x-100" /> },
  { name: 'Cortana', icon: <span className="size-[9px] rounded-full border-2 border-white" /> },
  { name: 'Edge', icon: <FaEdge className="size-[10px] text-[#35a7d8]" /> },
  {
    name: 'Explorer',
    open: true,
    icon: (
      <Icon className="size-[10px]">
        <path d="M1 2h7l2 2h9v14H1Z" fill="#f3ce5e" />
        <path d="M1 9h18v9H1Z" fill="#e8b53c" />
        <path d="M6 13h8v5H6Z" fill="#5794c9" />
      </Icon>
    )
  },
  { name: 'Store', icon: <FaShoppingBag className="size-[9px]" /> },
  { name: 'Mail', icon: <Mail className="size-[10px] fill-[#2a91de] text-[#7cc2f2]" /> },
  { name: 'Skype', open: true, icon: <FaSkype className="size-[10px] text-[#28a5e6]" /> },
  {
    name: 'Fusion 360',
    open: true,
    active: true,
    icon: (
      <Icon className="size-[10px]">
        <path d="M1 0h18v20H1Z" fill="#f3c08c" />
        <path d="M7 17V4h8M7 10h6" stroke="#b85d14" strokeWidth="3" />
      </Icon>
    )
  },
  {
    name: 'Chrome',
    open: true,
    icon: (
      <Icon className="size-[10px]">
        <circle cx="10" cy="10" r="10" fill="#e2493b" />
        <path d="M1 6a10 10 0 0 0 9 14l4-8-8-1Z" fill="#3aa657" />
        <path d="M19 6a10 10 0 0 1-9 14l4-8-1-6Z" fill="#f6cc3c" />
        <circle cx="10" cy="10" r="4.500" fill="#4a86e8" stroke="#fff" strokeWidth="1.500" />
      </Icon>
    )
  }
]

const Taskbar = () => {
  return (
    <footer className="flex h-[18px] items-center justify-between bg-linear-to-r from-[#301519] to-[#4b2427] font-['Open_Sans',sans-serif] text-[7px] text-white">
      <div className="flex h-full w-[216px]">
        {APPS.map((app) => {
          return (
            <button
              key={app.name}
              aria-label={app.name}
              className={clsx(
                'grid flex-1 place-items-center border-b',
                app.open ? 'border-[#76b5e8]' : 'border-transparent',
                app.active && 'bg-[#69474a]'
              )}
            >
              {app.icon}
            </button>
          )
        })}
      </div>
      <div className="flex items-center pr-[14px]">
        <div className="flex items-center gap-[9px]">
          <ChevronUp className="size-[9px]" />
          <Cloud className="size-[10px] fill-[#2488d8] text-[#2488d8]" />
          <BatteryCharging className="size-[10px]" />
          <Volume2 className="size-[10px]" />
          <Wifi className="size-[10px]" />
          <PenLine className="size-[9px]" />
          <Keyboard className="size-[12px]" />
        </div>
        <span className="ml-[5px]">ENG</span>
        <time className="ml-[9px]">3:11 AM</time>
        <MessageSquareText className="ml-[12px] size-[10px] fill-white text-white" />
      </div>
    </footer>
  )
}

const App = () => {
  return (
    <div className="flex min-h-screen flex-col">
      <TitleBar />
      <DocumentBar />
      <Toolbar />
      <Banner />
      <Canvas />
      <Timeline />
      <Taskbar />
    </div>
  )
}

export default App
